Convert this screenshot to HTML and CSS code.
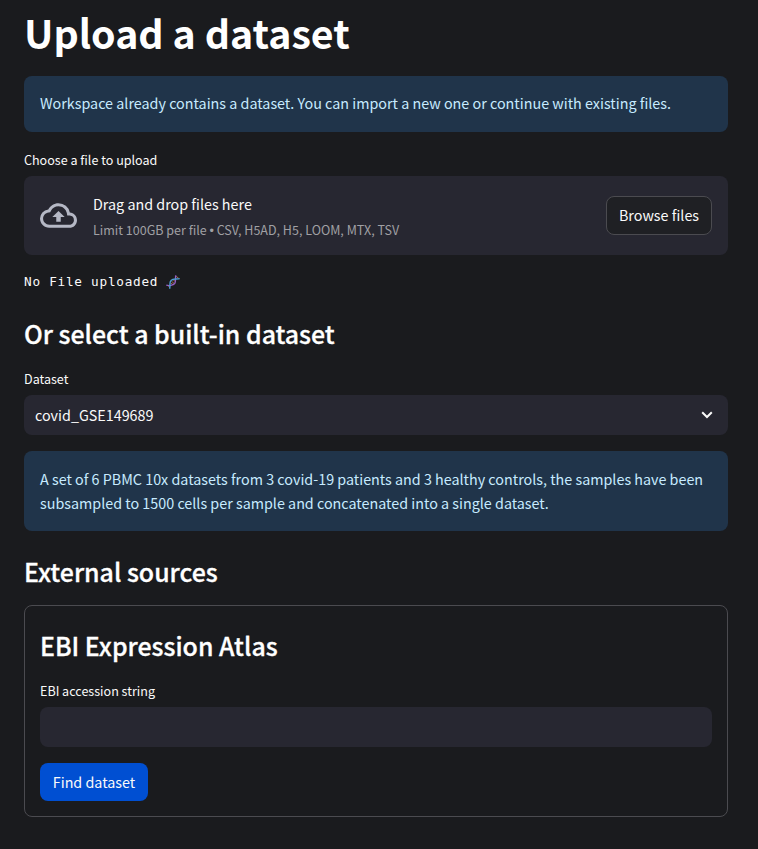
FILE: index.html
```html
<!DOCTYPE html>
<html lang="en">
<head>
<meta charset="utf-8">
<title>Upload a dataset</title>
<link rel="stylesheet" href="styles.css">
</head>
<body>
<main class="page">
  <h1 class="title"><span>Upload a dataset</span></h1>
  <div class="alert notice">Workspace already contains a dataset. You can import a new one or continue with existing files.</div>
  <label class="label upload-label">Choose a file to upload</label>
  <section class="dropzone">
    <svg class="cloud" viewBox="0 0 24 24" width="37" height="37" fill="#b5b8c5"><path d="M19.35 10.04A7.49 7.49 0 0 0 12 4C9.11 4 6.6 5.64 5.35 8.04A5.994 5.994 0 0 0 0 14c0 3.31 2.69 6 6 6h13c2.76 0 5-2.24 5-5 0-2.64-2.05-4.78-4.65-4.96zM19 18H6c-2.21 0-4-1.79-4-4 0-2.05 1.53-3.76 3.56-3.97l1.07-.11.5-.95A5.469 5.469 0 0 1 12 6c2.62 0 4.88 1.86 5.39 4.43l.3 1.5 1.53.11A2.98 2.98 0 0 1 22 15c0 1.65-1.35 3-3 3zM8 13h2.55v3h2.9v-3H16l-4-4z"/></svg>
    <div class="instructions">
      <span class="drop-main">Drag and drop files here</span>
      <span class="drop-limit">Limit 100GB per file <span class="bullet">•</span> CSV, H5AD, H5, LOOM, MTX, TSV</span>
    </div>
    <button class="button browse">Browse files</button>
  </section>
  <div class="status"><span>No File uploaded</span>
    <svg class="dna" viewBox="0 0 14 14" width="14" height="14" fill="none"><path d="M2.500 11.500l1.200 1M5.800 6.300l2.400 2.400M5 7.800l1.500 1.500M7.500 5l1.500 1.500M10.500 1.300l2 2" stroke="#b97a50" stroke-width="1"/><path d="M.3 10.200C3 11 7 10.500 8.700 8.500 10.300 6.500 8.800 3 10 .4" stroke="#9460c4" stroke-width="1.400"/><path d="M3.600 13.800C4.500 11 3 7.500 5 5.500 7 3.300 10.500 4.500 13.700 3.600" stroke="#4e9fd4" stroke-width="1.400"/></svg>
  </div>
  <h2 class="heading builtin"><span>Or select a built-in dataset</span></h2>
  <label class="label dataset-label">Dataset</label>
  <div class="select"><span>covid_GSE149689</span>
    <svg viewBox="0 0 12 8" width="12" height="8" fill="none" stroke="#fafafa" stroke-width="2"><path d="M1.200 1.300L6 6l4.800-4.700"/></svg>
  </div>
  <div class="alert description">A set of 6 PBMC 10x datasets from 3 covid-19 patients and 3 healthy controls, the samples have been<br>subsampled to 1500 cells per sample and concatenated into a single dataset.</div>
  <h2 class="heading external"><span>External sources</span></h2>
  <form class="card">
    <h2 class="heading atlas"><span>EBI Expression Atlas</span></h2>
    <label class="label accession-label" for="accession">EBI accession string</label>
    <input class="input" id="accession" type="text">
    <button class="button find" type="button">Find dataset</button>
  </form>
</main>
</body>
</html>
```
FILE: styles.css
```css
* { box-sizing: border-box; }
body {
  margin: 0;
  background: #1a1b1e;
  color: #fafafa;
  font-family: "Noto Sans CJK SC", "Noto Sans", sans-serif;
  font-size: 14.33px;
  line-height: 24px;
}
.page { width: 758px; height: 849px; padding: 5px 30px 0 24px; overflow: hidden; }
.title { margin: 0; height: 71px; font-size: 39.3px; line-height: 53px; font-weight: 700; color: #fff; white-space: nowrap; }
.alert { height: 56px; padding: 16px; border-radius: 8px; background: #20344a; color: #c7ebff; white-space: nowrap; }
.notice { padding-top: 15px; }
.label { display: block; height: 26px; font-size: 12.55px; line-height: 21px; }
.upload-label { margin-top: 17px; height: 27px; }
.dataset-label { margin-top: 14px; height: 27px; }
.accession-label { margin-top: 13px; height: 27px; }
.dropzone { display: flex; align-items: center; height: 79px; padding: 0 16px; border-radius: 8px; background: #272731; }
.cloud { flex: none; margin-right: 16px; }
.instructions { display: flex; flex-direction: column; flex: 1; white-space: nowrap; }
.drop-main { height: 27px; line-height: 24px; }
.drop-limit { height: 21px; font-size: 12.52px; line-height: 21px; color: #a0a0a4; }
.bullet { font-family: "Liberation Sans", sans-serif; line-height: 1; }
.button { font: inherit; color: #fafafa; border-radius: 8px; padding: 0; white-space: nowrap; }
.browse { width: 106px; height: 39px; padding-bottom: 2px; background: #1f2024; border: 1px solid #4b4b50; }
.status { display: flex; align-items: center; height: 22px; margin-top: 16px; gap: 8px; font-family: "DejaVu Sans Mono", "Liberation Mono", monospace; font-size: 12.7px; line-height: 22px; }
.status span { letter-spacing: 0.75px; }
.heading { margin: 0; font-size: 24.9px; line-height: 36px; font-weight: 500; color: #fff; -webkit-text-stroke: 0.3px #fff; white-space: nowrap; }
.builtin { height: 61px; padding-top: 22px; }
.select { display: flex; align-items: center; justify-content: space-between; height: 40px; padding: 0 15px 0 11px; border-radius: 8px; background: #272731; }
.description { height: 80px; margin-top: 16px; }
.external { height: 74px; padding-top: 22px; }
.card { height: 212px; padding: 21px 15px 0; border: 1px solid #4b4b50; border-radius: 8px; }
.atlas { height: 40px; }
.input { display: block; width: 100%; height: 40px; border: 0; border-radius: 8px; background: #272731; color: #fafafa; }
.find { display: block; margin-top: 16px; width: 108px; height: 38px; border: 0; background: #004fd2; }
```
